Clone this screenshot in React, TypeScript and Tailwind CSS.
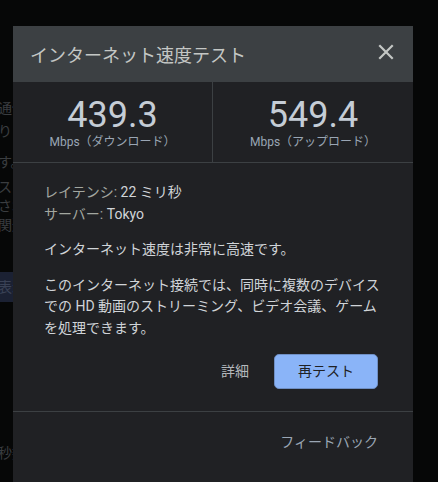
const bgLines = [
  { text: "通信", mt: "mt-[98px]" },
  { text: "りま", mt: "mt-[2px]" },
  { text: "す。", mt: "mt-[10px]" },
  { text: "スト", mt: "mt-[4px]" },
  { text: "され", mt: "mt-[-2px]" },
  { text: "関連", mt: "mt-[-2px]" },
];

const App = () => {
  return (
    <div
      className="relative w-[438px] h-[482px] overflow-hidden bg-[#060707] text-[14px]"
      style={{ fontFamily: "Roboto, 'Noto Sans CJK JP', sans-serif" }}
    >
      {/* page behind the dialog */}
      <div className="flex flex-col items-start -ml-[2px] text-[#3a3d40] leading-[21px]">
        {bgLines.map((l, i) => (
          <div key={i} className={l.mt}>
            {l.text}
          </div>
        ))}
        <div className="mt-[36px] h-[30px] w-[40px] bg-[#1b2133] flex items-center text-[#3a4256]">
          表示
        </div>
        <div className="mt-[141px]">秒数</div>
      </div>

      {/* dialog */}
      <div className="absolute left-[13px] top-[26px] w-[400px] h-[470px] bg-[#202124] flex flex-col">
        <div className="h-[56px] bg-[#3c4043] flex items-center justify-between pl-[17px] pr-[16px]">
          <span className="text-[18px] text-[#c4c7c5] mt-[3px]">インターネット速度テスト</span>
          <svg width="22" height="22" viewBox="0 0 24 24" className="-mt-[4px]">
            <path
              d="M5.5 5.5 L18.5 18.5 M18.5 5.5 L5.5 18.5"
              stroke="#c4c7c5"
              strokeWidth="2.4"
              strokeLinecap="square"
              fill="none"
            />
          </svg>
        </div>

        <div className="grid grid-cols-2 h-[81px] border-b border-[#3c4043]">
          <div className="flex flex-col items-center pt-[14px] border-r border-[#3c4043]">
            <span className="text-[36px] leading-[38px] text-[#c5cdd6]">439.3</span>
            <span className="text-[12px] leading-[16px] text-[#9aa6b4]">Mbps（ダウンロード）</span>
          </div>
          <div className="flex flex-col items-center pt-[14px]">
            <span className="text-[36px] leading-[38px] text-[#c5cdd6]">549.4</span>
            <span className="text-[12px] leading-[16px] text-[#9aa6b4]">Mbps（アップロード）</span>
          </div>
        </div>

        <div className="pl-[31px] pr-[35px] pt-[19px] leading-[21.5px] text-[#d0d4d8] whitespace-nowrap">
          <div>
            <span className="text-[#a3a7a0]">レイテンシ: </span>22 ミリ秒
          </div>
          <div>
            <span className="text-[#a3a7a0]">サーバー: </span>Tokyo
          </div>
          <p className="mt-[14px]">インターネット速度は非常に高速です。</p>
          <p className="mt-[14px]">
            このインターネット接続では、同時に複数のデバイス
            <br />
            での HD 動画のストリーミング、ビデオ会議、ゲーム
            <br />
            を処理できます。
          </p>
          <div className="flex justify-end items-center gap-[25px] mt-[15px]">
            <span className="text-[#b4b8bc]">詳細</span>
            <button className="w-[104px] h-[35px] rounded-[5px] bg-[#8ab4f8] text-[#202124] border border-[#6f8fc4]">
              再テスト
            </button>
          </div>
        </div>

        <div className="mt-[22px] border-t border-[#3c4043] flex justify-end pr-[35px] pt-[20px]">
          <span className="text-[#9aa6b4] leading-[21px]">フィードバック</span>
        </div>
      </div>
    </div>
  );
};

export default App;
